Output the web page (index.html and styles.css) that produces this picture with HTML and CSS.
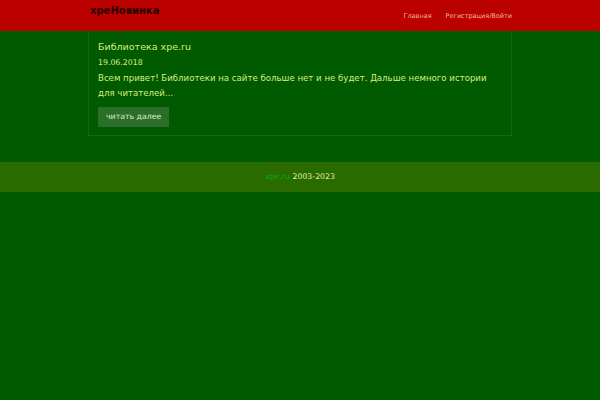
FILE: index.html
```html
<!DOCTYPE html>
<html lang="ru">
<head>
<meta charset="utf-8">
<link rel="stylesheet" href="styles.css">
</head>
<body>
<header class="topbar">
  <div class="wrap topbar-inner">
    <a class="logo" href="#">xpeНовинка</a>
    <nav class="nav">
      <a href="#">Главная</a>
      <a href="#">Регистрация/Войти</a>
    </nav>
  </div>
</header>
<main class="wrap">
  <article class="card">
    <h2 class="card-title">Библиотека xpe.ru</h2>
    <div class="card-date">19.06.2018</div>
    <p class="card-text">Всем привет! Библиотеки на сайте больше нет и не будет. Дальше немного истории для читателей...</p>
    <a class="btn" href="#">читать далее</a>
  </article>
</main>
<footer class="footer">
  <a href="#">xpe.ru</a> 2003-2023
</footer>
</body>
</html>
```
FILE: styles.css
```css
html, body { margin: 0; padding: 0; }
body {
  background: #005a00;
  font-family: "DejaVu Sans", sans-serif;
  color: #d8ec80;
  min-height: 400px;
}
a { text-decoration: none; }
.wrap { width: 424px; margin: 0 auto; }
.topbar { background: #bb0000; height: 31px; }
.topbar-inner { display: flex; justify-content: space-between; align-items: flex-start; height: 31px; }
.logo {
  color: #2a0000;
  font-weight: bold;
  font-size: 10px;
  line-height: 12px;
  margin-left: 2px;
  padding-top: 5px;
}
.nav { display: flex; gap: 14px; padding-top: 11px; }
.nav a { color: #f4b890; font-size: 6.5px; line-height: 10px; }
.card {
  border: 1px solid #176617;
  border-top: none;
  padding: 9px 9px 8px 9px;
}
.card-title { margin: 0; font-weight: normal; font-size: 9.5px; color: #d8ec80; line-height: 14px; }
.card-date { font-size: 7.8px; margin-top: 1.5px; line-height: 13px; }
.card-text { margin: 2px 0 6.5px; font-size: 8.6px; line-height: 15px; }
.btn {
  display: block;
  width: max-content;
  background: #2a6e2a;
  color: #e0f0c8;
  font-size: 7.8px;
  padding: 5px 8px;
  line-height: 10px;
}
.footer {
  margin-top: 26px;
  background: #2a6b00;
  height: 30px;
  line-height: 30px;
  text-align: center;
  font-size: 7.8px;
  color: #e0f0a0;
}
.footer a { color: #00b000; }
```
